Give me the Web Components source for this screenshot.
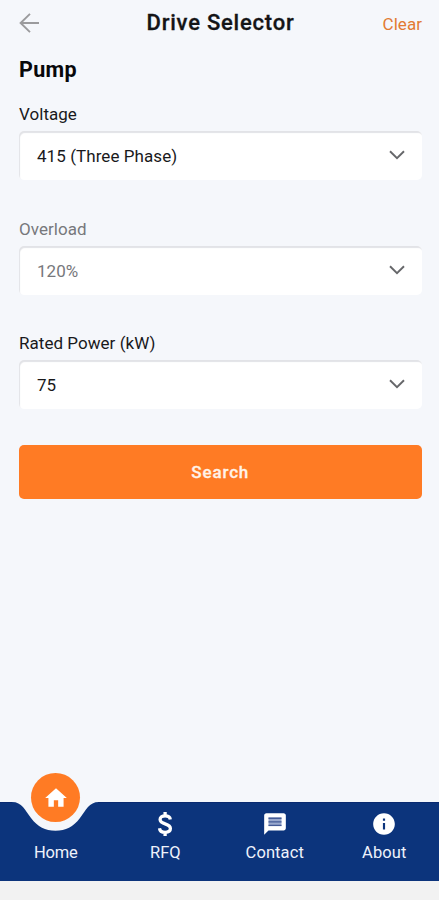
<!DOCTYPE html>
<html lang="en">
<head>
<meta charset="utf-8">
<title>Drive Selector</title>
<style>
html,body{margin:0;height:100%}
body{font-family:Roboto,"Liberation Sans",sans-serif;background:#f5f7fb}
</style>
</head>
<body>
<drive-app></drive-app>
<script>
const define = (name, html, setup) => {
  const template = document.createElement('template');
  template.innerHTML = html;
  customElements.define(name, class extends HTMLElement {
    constructor() {
      super();
      this.attachShadow({mode: 'open'}).append(template.content.cloneNode(true));
    }
    connectedCallback() { if (setup) setup(this, this.shadowRoot); }
  });
};

define('app-header', `
<style>
:host{display:grid;grid-template-columns:100px 1fr 100px;align-items:center;height:45px;padding:0 17px 0 19px;box-sizing:border-box;flex:none}
svg{display:block}
h1{margin:0;text-align:center;font-size:22px;line-height:26px;font-weight:500;color:#141416;letter-spacing:.78px;white-space:nowrap;-webkit-text-stroke:.3px #141416}
a{justify-self:end;font-size:17px;line-height:22px;color:#e27a32;padding-top:3px;letter-spacing:.05px}
</style>
<svg width="21" height="20" viewBox="0 0 21 20" fill="none" stroke="#9b9b9d" stroke-width="1.9"><path d="M20 10H1.6M11 .9 1.6 10l9.4 9.1"/></svg>
<h1><slot></slot></h1><a><slot name="action"></slot></a>`);

define('select-field', `
<style>
:host{display:block;height:114.7px;color:#19191b}
:host([muted]){color:#77787c}
label{display:block;font-size:17px;line-height:22px;height:28px;letter-spacing:.04px}
.box{display:flex;align-items:center;justify-content:space-between;height:49px;box-sizing:border-box;padding:1px 17px 0 18px;background:#fff;border-radius:5px;box-shadow:inset 1px 2px 1px #e2e3e7;font-size:17px;letter-spacing:.07px}
svg{display:block;margin-top:-2px}
</style>
<label></label>
<div class="box"><span><slot></slot></span>
<svg width="16" height="10" viewBox="0 0 16 10" fill="none" stroke="#66676a" stroke-width="1.9"><path d="m1 1.2 7 6.9 7-6.9"/></svg></div>`,
(el, root) => { root.querySelector('label').textContent = el.getAttribute('label'); });

define('primary-button', `
<style>
:host{display:block}
button{display:block;width:100%;height:54px;border:0;border-radius:5px;background:#ff7b24;color:#fff3e8;font:500 17px/54px Roboto,sans-serif;letter-spacing:.85px;padding:0;-webkit-text-stroke:.3px #fff3e8}
</style><button><slot></slot></button>`);

define('nav-item', `
<style>
:host{display:flex;flex-direction:column;align-items:center;flex:1;color:#eef2fb;font-size:16.5px;letter-spacing:var(--spacing,.1px)}
.icon{height:41px;display:flex;align-items:center;justify-content:center;padding-top:3px;box-sizing:border-box}
.label{line-height:20px}
:host([active]) .icon{width:49px;height:49px;margin-top:-28.5px;margin-bottom:20.5px;border-radius:50%;background:#ff7b24;padding:0}
</style>
<div class="icon"><slot name="icon"></slot></div><div class="label"><slot></slot></div>`);

define('bottom-nav', `
<style>
:host{display:block;position:relative;height:79px;flex:none}
.bg{position:absolute;left:0;top:0;display:block}
nav{display:flex;position:relative;padding-left:1px}
svg{display:block}
</style>
<svg class="bg" width="439" height="79" viewBox="0 0 439 79"><path fill="#0c347c" d="M0 0H12C22 0 25 8 31 16C38 25 45 28.700 55.500 28.700S73 25 80 16C86 8 89 0 99 0H439V79H0Z"/><path fill="none" stroke="#092a70" d="M98 .5H439M0 .5H12"/></svg>
<nav>
<nav-item active style="--spacing:-.25px"><svg slot="icon" width="26" height="26" viewBox="0 0 24 24" fill="#fff"><path d="M10 20v-6h4v6h5v-8h3L12 3 2 12h3v8z"/></svg>Home</nav-item>
<nav-item style="--spacing:-.1px"><svg slot="icon" width="16" height="26" viewBox="0 0 16 26" fill="none" stroke="#fff" stroke-width="3.3"><path d="M13.300 8.500C13 5.900 11 4.900 8.100 4.900C5 4.900 3.100 6.400 3.100 8.500C3.100 11 5.200 11.900 8.100 12.800S13.400 14.900 13.400 17.600C13.400 20 11.200 21.300 8.100 21.300C4.800 21.300 2.800 19.800 2.500 17.200M8.100 1V5M8.100 21V25"/></svg>RFQ</nav-item>
<nav-item><svg slot="icon" width="26" height="26" viewBox="0 0 24 24"><path fill="#fff" d="M20 2H4c-1.100 0-1.990.9-1.990 2L2 22l4-4h14c1.100 0 2-.9 2-2V4c0-1.100-.9-2-2-2z"/><path fill="#99a8cd" d="M6 6h12v8H6z"/><path stroke="#435a96" stroke-width="1.300" d="M6 6.700h12M6 10h12M6 13.300h12"/></svg>Contact</nav-item>
<nav-item><svg slot="icon" width="26" height="26" viewBox="0 0 24 24" fill="#fff"><path d="M12 2C6.480 2 2 6.480 2 12s4.480 10 10 10 10-4.480 10-10S17.520 2 12 2zm1 15h-2v-6h2v6zm0-8h-2V7h2v2z"/></svg>About</nav-item>
</nav>`);

define('drive-app', `
<style>
:host{display:flex;flex-direction:column;width:439px;height:900px;overflow:hidden;background:#f5f7fb}
main{flex:1;padding:11px 17.5px 0 19px;display:flex;flex-direction:column}
h2{margin:0 0 20px;font-size:21.500px;line-height:27px;font-weight:700;color:#08080a;letter-spacing:.3px}
footer{height:19.500px;background:#f2f2f2;flex:none}
primary-button{margin-top:-1.700px}
</style>
<app-header>Drive Selector<span slot="action">Clear</span></app-header>
<main>
<h2>Pump</h2>
<select-field label="Voltage">415 (Three Phase)</select-field>
<select-field label="Overload" muted>120%</select-field>
<select-field label="Rated Power (kW)">75</select-field>
<primary-button>Search</primary-button>
</main>
<bottom-nav></bottom-nav>
<footer></footer>`);
</script>
</body>
</html>
